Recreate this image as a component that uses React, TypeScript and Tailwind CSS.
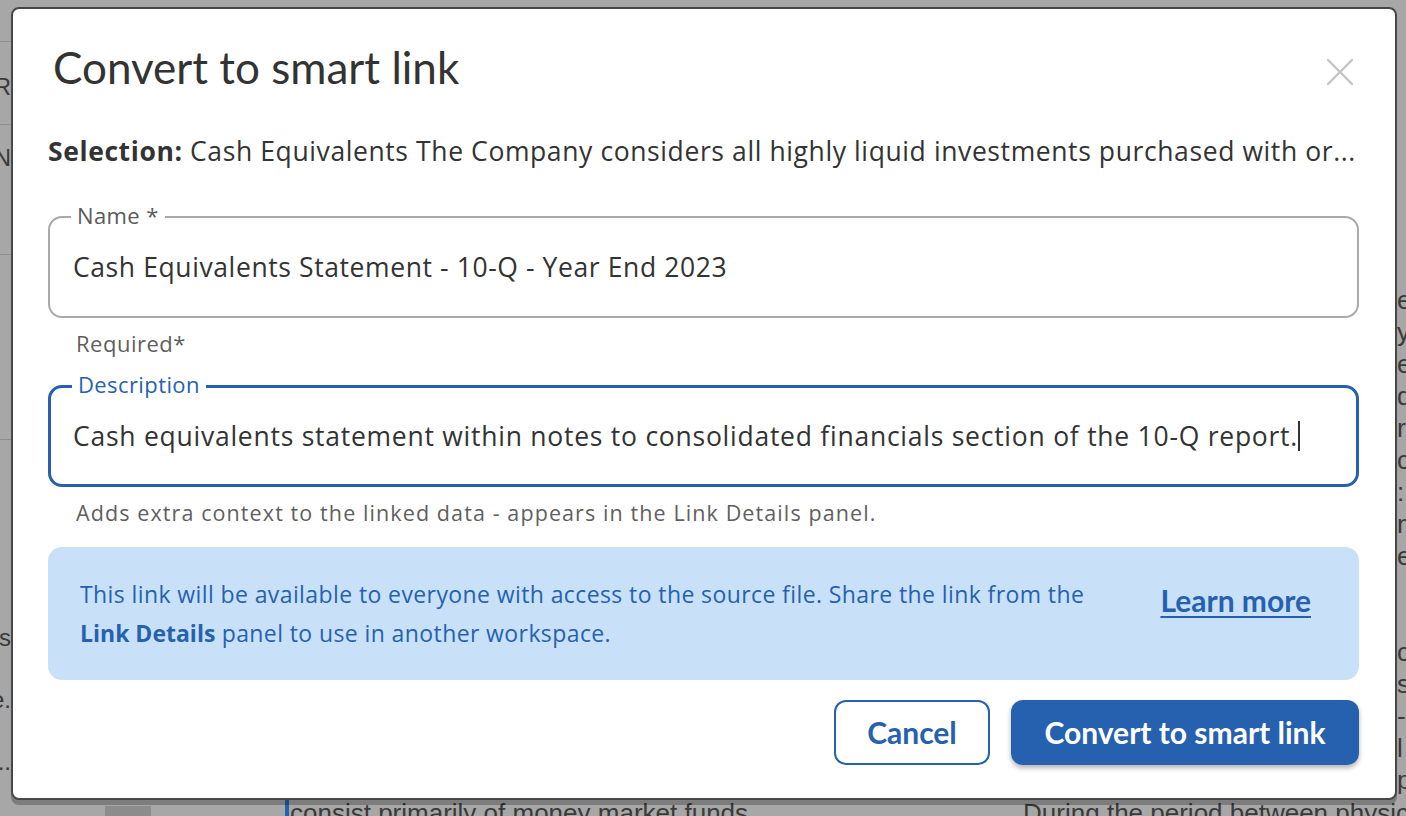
import { X } from 'lucide-react'

const leftBits = [
	{ h: 42, text: '', line: true },
	{ h: 57, text: 'R', line: false },
	{ h: 26, text: '', line: true },
	{ h: 45, text: 'N', line: false },
	{ h: 85, text: '', line: true },
	{ h: 185, text: '', line: true },
	{ h: 210, text: 's', line: false },
	{ h: 62, text: 'e.', line: false },
	{ h: 62, text: '..', line: false },
]

const rightBits = ['e', 'y', 'e', 'q', 'r', 'c', ':', 'n', 'e', '', '', 'c', 's', '-', 'l', 'p']

function Backdrop() {
	return (
		<div className="flex h-full w-full bg-[#a7a7a7] text-[#3a3a3a] font-['Liberation_Sans',sans-serif]">
			<div className="w-[11px] overflow-hidden shrink-0">
				<div className="w-[40px] -ml-[29px] text-right text-[24px] leading-none">
					{leftBits.map((b, i) => (
						<div
							key={i}
							style={{ height: b.h }}
							className={`flex items-end justify-end ${b.line ? 'border-b border-[#8f8f8f]' : ''}`}
						>
							{b.text}
						</div>
					))}
				</div>
			</div>
			<div className="flex-1 flex flex-col justify-end">
				<div className="flex items-end text-[26px] leading-none -mb-[10px]">
					<div className="ml-[94px] w-[46px] h-[20px] bg-[#8c8c8c]" />
					<div className="ml-[134px] border-l-[4px] border-[#2661b0] pl-[1px]">consist primarily of money market funds.</div>
					<div className="ml-auto mr-[-12px]">During the period between physic</div>
				</div>
			</div>
			<div className="w-[9px] overflow-hidden shrink-0 pt-[284px]">
				<div className="w-[40px] text-[26px] leading-[32px]">
					{rightBits.map((c, i) => (
						<div key={i} className="h-[32px]">
							{c}
						</div>
					))}
				</div>
			</div>
		</div>
	)
}

export default function App() {
	return (
		<div className="relative h-[816px] w-full overflow-hidden">
			<Backdrop />
			<div className="absolute inset-0 pt-[7px] pl-[11px] pr-[9px] pb-[16px] font-['Open_Sans',sans-serif]">
				<div className="h-[793px] rounded-[8px] border-2 border-[#474747] bg-white shadow-[0_5px_0_rgba(0,0,0,0.25)] pl-[35px] pr-[36px] pt-[30px]">
					<div className="flex h-[56px] items-center justify-between">
						<h1 className="ml-[5px] font-['Lato',sans-serif] text-[44px] leading-[56px] text-[#333333]">
							Convert to smart link
						</h1>
						<button className="-mr-[5px] mt-[10px] text-[#c4c4c4]">
							<X size={48} strokeWidth={1.2} />
						</button>
					</div>

					<p className="mt-[39px] text-[26.5px] tracking-[0.6px] leading-[34px] text-[#333333] whitespace-nowrap">
						<span className="font-bold">Selection:</span> Cash Equivalents The Company considers all highly liquid investments purchased with or...
					</p>

					<div className="relative mt-[48px] flex h-[102px] items-center rounded-[14px] border-2 border-[#a9a9a9] px-[23px]">
						<span className="absolute -top-[17px] left-[21px] bg-white px-[6px] text-[22px] tracking-[0.4px] leading-[28px] text-[#5a5a5a]">
							Name *
						</span>
						<div className="text-[26.5px] tracking-[0.6px] leading-[34px] text-[#333333]">
							Cash Equivalents Statement - 10-Q - Year End 2023
						</div>
					</div>
					<div className="mt-[10px] ml-[28px] text-[22px] tracking-[0.5px] leading-[30px] text-[#5f5f5f]">Required*</div>

					<div className="relative mt-[27px] flex h-[102px] items-center rounded-[14px] border-[3px] border-[#2661b0] px-[22px]">
						<span className="absolute -top-[18px] left-[21px] bg-white px-[6px] text-[22px] tracking-[0.4px] leading-[28px] text-[#2661b0]">
							Description
						</span>
						<div className="flex items-center text-[26.5px] tracking-[0.75px] leading-[34px] text-[#333333]">
							Cash equivalents statement within notes to consolidated financials section of the 10-Q report.
							<span className="inline-block h-[30px] w-[2px] bg-[#333333]" />
						</div>
					</div>
					<div className="mt-[11px] ml-[28px] text-[21.5px] tracking-[1.1px] leading-[30px] text-[#5f5f5f]">
						Adds extra context to the linked data - appears in the Link Details panel.
					</div>

					<div className="mt-[19px] flex h-[133px] items-center justify-between rounded-[14px] bg-[#c8e1f9] pl-[32px] pr-[48px] text-[#2661b0]">
						<p className="max-w-[1030px] text-[23px] tracking-[0.4px] leading-[39px]">
							This link will be available to everyone with access to the source file. Share the link from the{' '}
							<span className="font-bold tracking-[0px]">Link Details</span> panel to use in another workspace.
						</p>
						<a className="mb-[26px] font-['Lato',sans-serif] text-[30px] font-bold underline decoration-2 underline-offset-4">
							Learn more
						</a>
					</div>

					<div className="mt-[20px] flex justify-end gap-[21px] font-['Lato',sans-serif]">
						<button className="h-[65px] w-[156px] rounded-[12px] border-2 border-[#2661b0] bg-white text-[30px] font-bold text-[#2661b0]">
							Cancel
						</button>
						<button className="h-[65px] w-[348px] rounded-[12px] bg-[#2661b0] text-[30px] font-bold text-white shadow-[0_3px_5px_rgba(0,0,0,0.3)]">
							Convert to smart link
						</button>
					</div>
				</div>
			</div>
		</div>
	)
}
